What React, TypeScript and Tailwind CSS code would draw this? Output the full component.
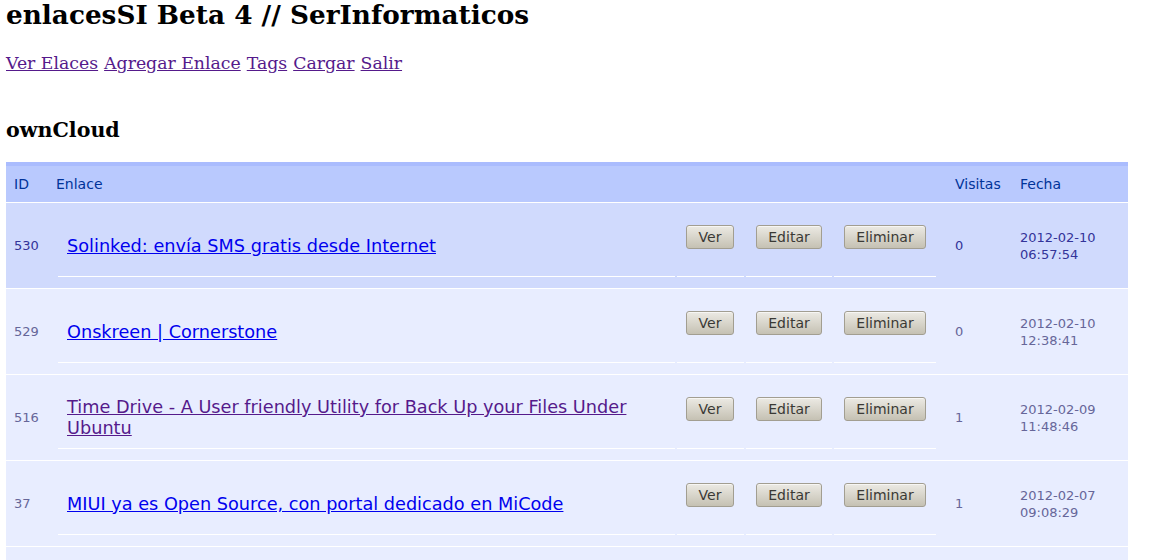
import React from "react";

type Row = {
  id: string;
  title: string;
  visited?: boolean;
  visits: string;
  date: string;
  time: string;
  hover?: boolean;
};

const rows: Row[] = [
  { id: "530", title: "Solinked: envía SMS gratis desde Internet", visits: "0", date: "2012-02-10", time: "06:57:54", hover: true },
  { id: "529", title: "Onskreen | Cornerstone", visits: "0", date: "2012-02-10", time: "12:38:41" },
  { id: "516", title: "Time Drive - A User friendly Utility for Back Up your Files Under Ubuntu", visited: true, visits: "1", date: "2012-02-09", time: "11:48:46" },
  { id: "37", title: "MIUI ya es Open Source, con portal dedicado en MiCode", visits: "1", date: "2012-02-07", time: "09:08:29" },
  { id: "12", title: "Nextcloud vs ownCloud", visits: "0", date: "2012-02-05", time: "10:15:02" },
];

function Btn({ label, w }: { label: string; w: string }) {
  return (
    <button
      className={`${w} h-[24px] rounded-[3px] border border-[#a29e91] bg-linear-to-b from-[#eceae4] to-[#c5c1b3] text-[14px] leading-none text-[#3a3935] font-['DejaVu_Sans',sans-serif] shadow-[inset_0_1px_0_rgba(255,255,255,0.6)]`}
    >
      {label}
    </button>
  );
}

export default function App() {
  return (
    <div className="min-h-[560px] bg-white px-[6px] pt-[0px] font-['DejaVu_Serif',serif] text-black">
      <h2 className="text-[26.3px] font-bold leading-[30px]">enlacesSI Beta 4 // SerInformaticos</h2>
      <nav className="mt-[23px] flex gap-[6px] text-[17.3px] leading-[20px]">
        {["Ver Elaces", "Agregar Enlace", "Tags", "Cargar", "Salir"].map((t) => (
          <a key={t} href="#" className="text-[#551a8b] underline">
            {t}
          </a>
        ))}
      </nav>
      <h3 className="mt-[46px] text-[20.6px] font-bold leading-[23px]">ownCloud</h3>
      <div className="mt-[20px] w-[1122px] font-['DejaVu_Sans',sans-serif]">
        <div className="flex h-[41px] border-t-4 border-b border-t-[#aabcfe] border-b-white bg-[#b9c9fe] text-[14px] text-[#003399]">
          <div className="flex w-[42px] items-center px-2">ID</div>
          <div className="flex w-[898px] items-center px-2">Enlace</div>
          <div className="flex w-[66px] items-center pl-[9px]">Visitas</div>
          <div className="flex w-[116px] items-center px-2">Fecha</div>
        </div>
        {rows.map((r) => (
          <div
            key={r.id}
            className={`flex h-[86px] border-b border-white text-[13px] ${
              r.hover ? "bg-[#d0dafd] text-[#333399]" : "bg-[#e8edff] text-[#666699]"
            }`}
          >
            <div className="flex w-[42px] items-center px-2">{r.id}</div>
            <div className="flex w-[898px] items-center gap-[2px] px-[10px]">
              <div className="flex h-[63px] w-[617px] items-center border-b border-white pl-[9px] pr-2 pt-[2px]">
                <a
                  href="#"
                  className={`text-[17.7px] leading-[21px] underline ${
                    r.visited ? "text-[#551a8b]" : "text-[#0000ee]"
                  }`}
                >
                  {r.title}
                </a>
              </div>
              <div className="h-[63px] w-[67px] border-b border-white pl-[9px] pt-[11px]">
                <Btn label="Ver" w="w-[48px]" />
              </div>
              <div className="h-[63px] w-[86px] border-b border-white pl-[10px] pt-[11px]">
                <Btn label="Editar" w="w-[66px]" />
              </div>
              <div className="h-[63px] w-[102px] border-b border-white pl-[10px] pt-[11px]">
                <Btn label="Eliminar" w="w-[82px]" />
              </div>
            </div>
            <div className="flex w-[66px] items-center pl-[9px]">{r.visits}</div>
            <div className="flex w-[116px] flex-col justify-center px-2 leading-[17px]">
              <span>{r.date}</span>
              <span>{r.time}</span>
            </div>
          </div>
        ))}
      </div>
    </div>
  );
}
